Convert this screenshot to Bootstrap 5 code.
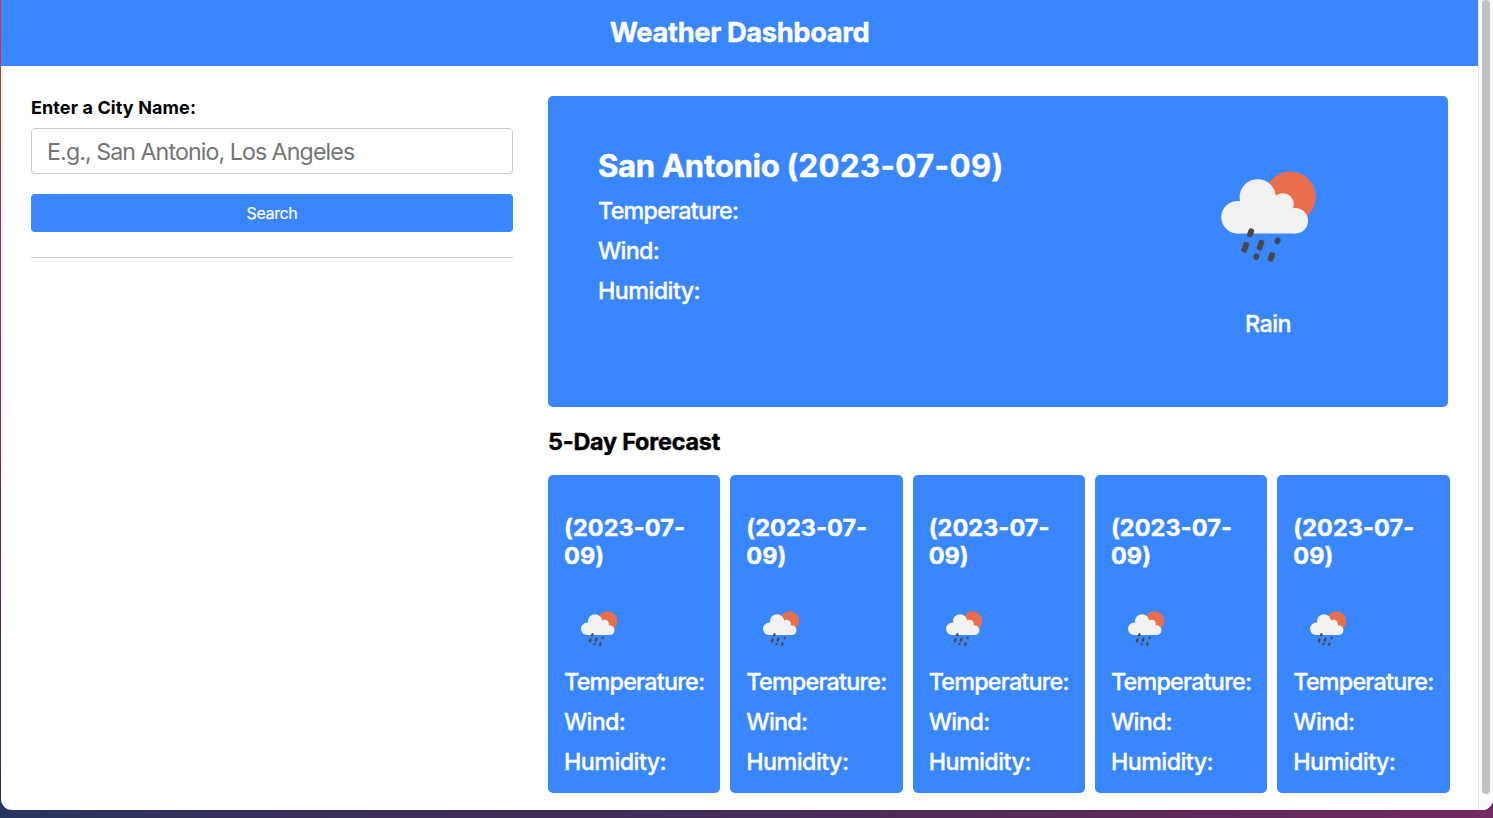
<!DOCTYPE html>
<html lang="en">
<head>
<meta charset="utf-8">
<meta name="viewport" content="width=device-width, initial-scale=1">
<title>Weather Dashboard</title>
<link href="https://cdn.jsdelivr.net/npm/bootstrap@5.3.0/dist/css/bootstrap.min.css" rel="stylesheet">
<style>
  :root { --sky: #3a86ff; }
  html, body { height: 100%; }
  body {
    font-family: Inter, "Liberation Sans", sans-serif;
    color: #000; font-size: 24px; line-height: 1.2;
    overflow: hidden; padding: 0 0 8px 1px;
    background:
      linear-gradient(to bottom, #d5382f, #b01c48 40%, #3a2c60 85%, #24345c) left top / 1px 100% no-repeat,
      linear-gradient(to right, #26355c, #3a2e59 20%, #432d57 48%, #5c2a59 76%, #722a62);
  }
  h1, h2, h3 { -webkit-text-stroke: .4px currentColor; }
  .window-frame { height: 810px; border-radius: 0 0 11px 11px; background: #fff; overflow: hidden; }
  .scroll-track { width: 15px; background: #fafafa; border-left: 1px solid #e8e8e8; padding: 0 3px; }
  .scroll-thumb { width: 8px; height: 794px; border-radius: 4px; background: #c1c1c1; }
  .top-bar { height: 66px; background: var(--sky); }
  .top-bar h1 { font-size: 27.3px; letter-spacing: -.37px; line-height: 34px; }
  .page-body { padding: 30px; gap: 35px; }
  .search-pane { width: 482px; }
  .search-pane label { font-size: 18px; font-weight: 700; line-height: 22px; letter-spacing: .1px; padding-top: 1px; margin-bottom: 9px; }
  .city-input { height: 46px; padding: 2px 15px 0; font-size: 23.2px; letter-spacing: -.86px; word-spacing: -.4px; border: 1px solid #ccc; border-radius: 4px; }
  .city-input::placeholder { color: #757575; }
  .search-btn { height: 38px; margin-top: 20px; padding: 0; border: 0; border-radius: 4px; background: var(--sky); color: #fff; font-size: 16px; letter-spacing: -.38px; -webkit-text-stroke: .2px #fff; }
  .rule { height: 1px; margin-top: 25px; background: #ccc; }
  .results-pane { width: 900px; }
  .today { height: 311px; padding: 50px; border-radius: 5px; background: var(--sky); }
  .today h2 { font-size: 31.2px; line-height: 40px; letter-spacing: -.35px; margin-bottom: 5px; }
  .today h2 span { letter-spacing: .35px; }
  .reading { font-size: 23.3px; font-weight: 500; line-height: 40px; letter-spacing: -.75px; -webkit-text-stroke: .3px currentColor; }
  .reading:last-child { letter-spacing: -.55px; }
  .today-icon { width: 140px; margin-right: 60px; padding-top: 4px; }
  .today-icon .reading { margin-top: 24px; }
  .forecast-title { font-size: 23.4px; line-height: 28px; letter-spacing: -.22px; margin: 21px 0 19px; }
  .forecast-grid { display: grid; grid-template-columns: repeat(5, 1fr); gap: 10px; width: 901.6px; }
  .day { height: 318px; padding: 39px 0 0 16px; border-radius: 5px; background: var(--sky); }
  .day h3 { font-size: 23.5px; line-height: 28px; letter-spacing: .05px; margin-bottom: 33px; }
  .day svg { margin: 0 0 9px 8px; }
</style>
</head>
<body>
<svg width="0" height="0" class="position-absolute" aria-hidden="true">
  <symbol id="rain" viewBox="-2 0 140 130">
    <circle cx="90.3" cy="47" r="25.4" fill="#ea6e4b"/>
    <g fill="#f2f2f2">
      <circle cx="57.7" cy="47.3" r="18.1"/>
      <circle cx="37.5" cy="67.2" r="16.2"/>
      <circle cx="82.7" cy="54.3" r="11"/>
      <circle cx="95.4" cy="70.7" r="12.7"/>
      <path d="M37.5 83.4V60L45 48H75L91 55L95.4 83.4Z"/>
    </g>
    <g stroke="#484848" fill="none" stroke-linecap="round" stroke-width="5.8">
      <path d="M51.2 81.2L50 84.4M77.8 90.2L77.3 91.1M56.5 106.3L56.2 107"/>
    </g>
    <g fill="#484848">
      <rect x="-2.9" y="-5.3" width="5.8" height="10.6" rx="1.9" transform="translate(45.1 97.3) rotate(19)"/>
      <rect x="-2.9" y="-5.3" width="5.8" height="10.6" rx="1.9" transform="translate(60.5 95.2) rotate(19)"/>
      <rect x="-2.9" y="-4.7" width="5.8" height="9.4" rx="1.9" transform="translate(71.4 106.9) rotate(19)"/>
    </g>
  </symbol>
</svg>
<div class="window-frame d-flex">
  <div class="flex-grow-1">
    <header class="top-bar d-flex align-items-center justify-content-center text-white"><h1 class="m-0 fw-bold">Weather Dashboard</h1></header>
    <main class="page-body d-flex">
      <section class="search-pane flex-shrink-0">
        <label for="city" class="d-block">Enter a City Name:</label>
        <input id="city" class="city-input form-control" type="text" placeholder="E.g., San Antonio, Los Angeles">
        <button class="search-btn btn w-100 d-block" type="button">Search</button>
        <div class="rule"></div>
      </section>
      <section class="results-pane flex-shrink-0">
        <div class="today d-flex justify-content-between text-white">
          <div>
            <h2 class="fw-bold">San Antonio <span>(2023-07-09)</span></h2>
            <div class="reading">Temperature:</div>
            <div class="reading">Wind:</div>
            <div class="reading">Humidity:</div>
          </div>
          <div class="today-icon text-center">
            <svg class="d-block" width="140" height="130"><use href="#rain"/></svg>
            <div class="reading">Rain</div>
          </div>
        </div>
        <h2 class="forecast-title fw-bold">5-Day Forecast</h2>
        <div class="forecast-grid text-white">
          <article class="day"><h3 class="fw-bold">(2023-07-<br>09)</h3><svg class="d-block" width="54" height="50"><use href="#rain"/></svg><div class="reading">Temperature:</div><div class="reading">Wind:</div><div class="reading">Humidity:</div></article>
          <article class="day"><h3 class="fw-bold">(2023-07-<br>09)</h3><svg class="d-block" width="54" height="50"><use href="#rain"/></svg><div class="reading">Temperature:</div><div class="reading">Wind:</div><div class="reading">Humidity:</div></article>
          <article class="day"><h3 class="fw-bold">(2023-07-<br>09)</h3><svg class="d-block" width="54" height="50"><use href="#rain"/></svg><div class="reading">Temperature:</div><div class="reading">Wind:</div><div class="reading">Humidity:</div></article>
          <article class="day"><h3 class="fw-bold">(2023-07-<br>09)</h3><svg class="d-block" width="54" height="50"><use href="#rain"/></svg><div class="reading">Temperature:</div><div class="reading">Wind:</div><div class="reading">Humidity:</div></article>
          <article class="day"><h3 class="fw-bold">(2023-07-<br>09)</h3><svg class="d-block" width="54" height="50"><use href="#rain"/></svg><div class="reading">Temperature:</div><div class="reading">Wind:</div><div class="reading">Humidity:</div></article>
        </div>
      </section>
    </main>
  </div>
  <div class="scroll-track flex-shrink-0"><div class="scroll-thumb"></div></div>
</div>
<script src="https://cdn.jsdelivr.net/npm/bootstrap@5.3.0/dist/js/bootstrap.bundle.min.js"></script>
</body>
</html>
